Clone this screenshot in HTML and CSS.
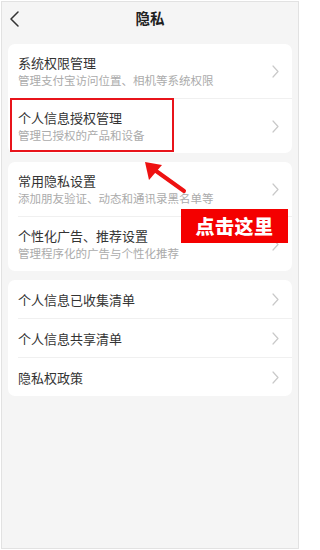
FILE: index.html
```html
<!DOCTYPE html>
<html lang="zh-CN">
<head>
<meta charset="utf-8">
<title>隐私</title>
<link rel="stylesheet" href="styles.css">
</head>
<body>
<div class="screen">
  <header class="topbar">
    <span class="back">
      <svg width="11" height="16" viewBox="0 0 11 16"><path d="M9 1 L2 8 L9 15" fill="none" stroke="#333" stroke-width="1.5" stroke-linecap="round" stroke-linejoin="round"/></svg>
    </span>
    <h1 class="title">隐私</h1>
    <span class="spacer"></span>
  </header>

  <div class="cards">
    <section class="card">
      <div class="row two">
        <div class="texts">
          <div class="main">系统权限管理</div>
          <div class="sub">管理支付宝访问位置、相机等系统权限</div>
        </div>
        <svg class="chev" width="7" height="13" viewBox="0 0 7 13"><path d="M1 1 L6 6.5 L1 12" fill="none" stroke="#c9c9c9" stroke-width="1.2" stroke-linecap="round" stroke-linejoin="round"/></svg>
      </div>
      <div class="row two marked">
        <div class="texts">
          <div class="main">个人信息授权管理</div>
          <div class="sub">管理已授权的产品和设备</div>
        </div>
        <svg class="chev" width="7" height="13" viewBox="0 0 7 13"><path d="M1 1 L6 6.5 L1 12" fill="none" stroke="#c9c9c9" stroke-width="1.2" stroke-linecap="round" stroke-linejoin="round"/></svg>
        <span class="highlight"></span>
      </div>
    </section>

    <section class="card">
      <div class="row two">
        <div class="texts">
          <div class="main">常用隐私设置</div>
          <div class="sub">添加朋友验证、动态和通讯录黑名单等</div>
        </div>
        <svg class="chev" width="7" height="13" viewBox="0 0 7 13"><path d="M1 1 L6 6.5 L1 12" fill="none" stroke="#c9c9c9" stroke-width="1.2" stroke-linecap="round" stroke-linejoin="round"/></svg>
      </div>
      <div class="row two">
        <div class="texts">
          <div class="main">个性化广告、推荐设置</div>
          <div class="sub">管理程序化的广告与个性化推荐</div>
        </div>
        <svg class="chev" width="7" height="13" viewBox="0 0 7 13"><path d="M1 1 L6 6.5 L1 12" fill="none" stroke="#c9c9c9" stroke-width="1.2" stroke-linecap="round" stroke-linejoin="round"/></svg>
      </div>
    </section>

    <section class="card">
      <div class="row one">
        <div class="main">个人信息已收集清单</div>
        <svg class="chev" width="7" height="13" viewBox="0 0 7 13"><path d="M1 1 L6 6.5 L1 12" fill="none" stroke="#c9c9c9" stroke-width="1.2" stroke-linecap="round" stroke-linejoin="round"/></svg>
      </div>
      <div class="row one">
        <div class="main">个人信息共享清单</div>
        <svg class="chev" width="7" height="13" viewBox="0 0 7 13"><path d="M1 1 L6 6.5 L1 12" fill="none" stroke="#c9c9c9" stroke-width="1.2" stroke-linecap="round" stroke-linejoin="round"/></svg>
      </div>
      <div class="row one">
        <div class="main">隐私权政策</div>
        <svg class="chev" width="7" height="13" viewBox="0 0 7 13"><path d="M1 1 L6 6.5 L1 12" fill="none" stroke="#c9c9c9" stroke-width="1.2" stroke-linecap="round" stroke-linejoin="round"/></svg>
      </div>
    </section>
  </div>

  <svg class="arrow" width="50" height="40" viewBox="0 0 50 40">
    <line x1="14" y1="12.5" x2="44" y2="34" stroke="#ee1111" stroke-width="4" stroke-linecap="round"/>
    <polygon points="5,5 22,8 9,23" fill="#ee1111"/>
  </svg>
  <div class="callout">点击这里</div>
</div>
</body>
</html>
```

FILE: styles.css
```css
* { box-sizing: border-box; }

html, body {
  margin: 0;
  padding: 0;
  background: #ffffff;
}

body {
  font-family: "Noto Sans CJK SC", "Noto Sans", sans-serif;
}

.screen {
  position: relative;
  width: 298px;
  height: 548px;
  margin: 1px;
  border: 1px solid #e2e2e2;
  background: #f5f5f5;
  padding: 0 6px;
  overflow: hidden;
}

.topbar {
  display: grid;
  grid-template-columns: 30px 1fr 30px;
  align-items: center;
  height: 32px;
  margin-bottom: 10px;
}

.back {
  display: flex;
  align-items: center;
  padding-left: 1px;
  padding-top: 2px;
}

.title {
  margin: 0;
  text-align: center;
  font-size: 14.5px;
  font-weight: 700;
  color: #1f1f1f;
  line-height: 20px;
}

.cards {
  display: flex;
  flex-direction: column;
  gap: 9px;
}

.card {
  background: #ffffff;
  border-radius: 7px;
  padding-left: 10px;
}

.row {
  position: relative;
  display: flex;
  align-items: center;
  justify-content: space-between;
  padding-right: 13px;
  border-bottom: 1px solid #f0f0f0;
}

.row:last-child {
  border-bottom: none;
}

.row.two {
  padding-top: 10px;
  padding-bottom: 9px;
}

.row.one {
  padding-top: 10px;
  padding-bottom: 9px;
}

.texts {
  display: flex;
  flex-direction: column;
}

.main {
  font-size: 13px;
  line-height: 18px;
  color: #333333;
}

.row.one .main {
  line-height: 19px;
}

.sub {
  font-size: 11.5px;
  line-height: 17px;
  color: #ababab;
}

.chev {
  display: block;
  flex: none;
}

.highlight {
  position: absolute;
  left: -8px;
  top: -1px;
  width: 164px;
  height: 54px;
  border: 2px solid #e8141b;
}

.arrow {
  position: absolute;
  left: 138px;
  top: 155px;
}

.callout {
  position: absolute;
  left: 179px;
  top: 207px;
  width: 107px;
  height: 34px;
  background: #f40000;
  color: #ffffff;
  font-size: 19px;
  font-weight: 900;
  line-height: 34px;
  text-align: center;
  letter-spacing: 0.5px;
}
```
